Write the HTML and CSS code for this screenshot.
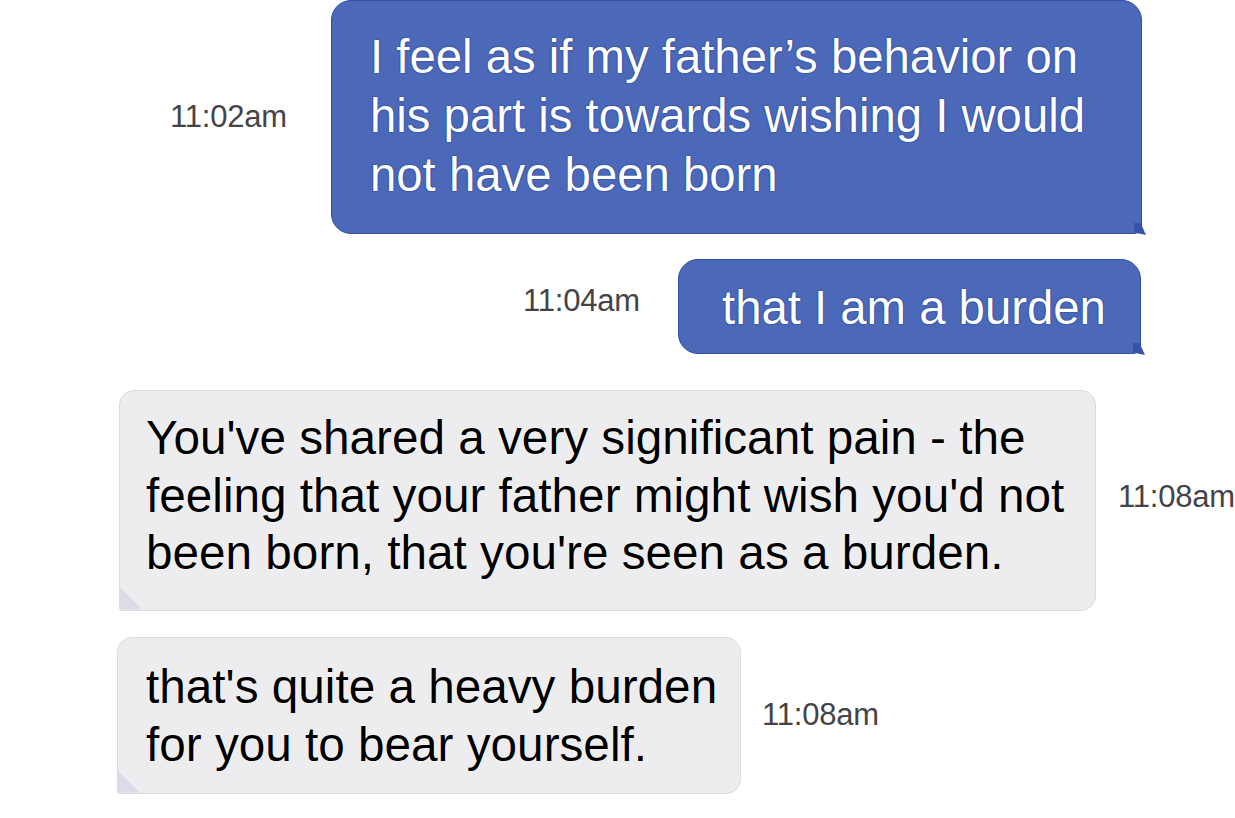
FILE: index.html
```html
<!DOCTYPE html>
<html lang="en">
<head>
<meta charset="utf-8">
<title>Chat</title>
<link rel="stylesheet" href="styles.css">
</head>
<body>
<main class="chat">
  <div class="row row-out row-1">
    <span class="time">11:02am</span>
    <div class="bubble out b1">I feel as if my father’s behavior on his part is towards wishing I would not have been born</div>
  </div>
  <div class="row row-out row-2">
    <span class="time t2">11:04am</span>
    <div class="bubble out b2">that I am a burden</div>
  </div>
  <div class="row row-in row-3">
    <div class="bubble in b3">You've shared a very significant pain - the feeling that your father might wish you'd not been born, that you're seen as a burden.</div>
    <span class="time t3">11:08am</span>
  </div>
  <div class="row row-in row-4">
    <div class="bubble in b4">that's quite a heavy burden for you to bear yourself.</div>
    <span class="time">11:08am</span>
  </div>
</main>
</body>
</html>
```

FILE: styles.css
```css
html, body {
  margin: 0;
  padding: 0;
  background: #ffffff;
  overflow: hidden;
}
body {
  width: 1235px;
  height: 818px;
  font-family: "Liberation Sans", Arial, Helvetica, sans-serif;
}
.chat {
  display: flex;
  flex-direction: column;
  width: 1235px;
}
.row {
  display: flex;
  align-items: center;
}
.row-out {
  justify-content: flex-end;
  padding-right: 93px;
}
.row-in {
  justify-content: flex-start;
}
.row-1 { gap: 44px; margin-top: 0; }
.row-2 { gap: 38px; margin-top: 25px; padding-right: 94px; }
.row-3 { gap: 22px; margin-top: 36px; padding-left: 119px; }
.row-4 { gap: 21px; margin-top: 26px; padding-left: 117px; }

.time {
  font-size: 31px;
  color: #444448;
  white-space: nowrap;
  flex: none;
  letter-spacing: -0.2px;
}
.t2 { position: relative; top: -6px; }
.t3 { position: relative; top: -3px; }

.bubble {
  position: relative;
  box-sizing: border-box;
  flex: none;
}
.out {
  background: #4b68b9;
  border: 1px solid #2f4ea6;
  border-radius: 20px;
  border-bottom-right-radius: 8px;
  color: #ffffff;
  font-size: 47.3px;
  line-height: 59px;
  text-shadow: 0 0 1.5px #1e3c92, 0 0 1px #1e3c92;
}
.out::after {
  content: "";
  position: absolute;
  right: -5px;
  bottom: -2px;
  width: 12px;
  height: 12px;
  background: #3553a8;
  clip-path: polygon(0 0, 55% 0, 100% 100%, 0 80%);
}
.b1 {
  width: 811px;
  padding: 26px 20px 29px 38px;
}
.b2 {
  width: 463px;
  padding: 18px 20px 16px 43px;
  white-space: nowrap;
}
.in {
  background: #ededf0;
  border: 1px solid #d9d9e1;
  border-radius: 15px;
  border-bottom-left-radius: 3px;
  color: #000000;
  font-size: 47.7px;
  line-height: 57.5px;
  text-shadow: 0 0 2px #ffffff, 0 0 1px #ffffff;
}
.in::before {
  content: "";
  position: absolute;
  left: 0;
  bottom: 0;
  width: 22px;
  height: 22px;
  background: #dcdce8;
  clip-path: polygon(0 0, 0 100%, 100% 100%);
  border-bottom-left-radius: 2px;
}
.b3 {
  width: 977px;
  padding: 18px 8px 28px 26px;
}
.b4 {
  width: 624px;
  padding: 20px 8px 19px 28px;
  line-height: 58px;
}
```
